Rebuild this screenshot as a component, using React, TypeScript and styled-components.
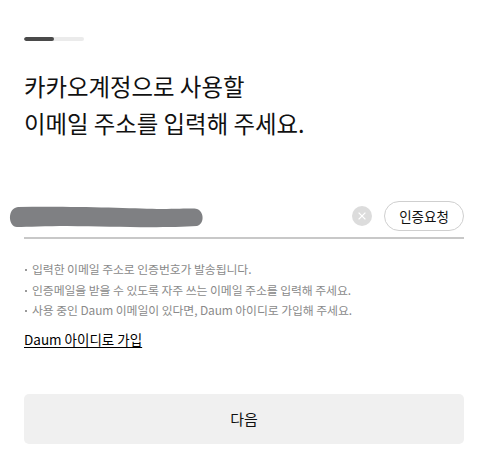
import React, { FC } from 'react';
import styled, { createGlobalStyle } from 'styled-components';

const GlobalStyle = createGlobalStyle`
	html, body {
		margin: 0;
		padding: 0;
		background: #fff;
	}
	body {
		font-family: 'Noto Sans CJK KR', 'Noto Sans', 'Liberation Sans', sans-serif;
		color: #000;
	}
`;

const notices = [
	'입력한 이메일 주소로 인증번호가 발송됩니다.',
	'인증메일을 받을 수 있도록 자주 쓰는 이메일 주소를 입력해 주세요.',
	'사용 중인 Daum 이메일이 있다면, Daum 아이디로 가입해 주세요.',
];

const App: FC = () => {
	return (
		<>
			<GlobalStyle />
			<Page>
				<Progress>
					<ProgressFill $percent={50} />
				</Progress>
				<Title>
					카카오계정으로 사용할
					<br />
					이메일 주소를 입력해 주세요.
				</Title>
				<InputRow>
					<EmailInput type="text" aria-label="이메일" />
					<Redaction viewBox="0 0 198 22" preserveAspectRatio="none">
						<path
							d="M11 1 C60 0 120 2 150 3 C170 3 187 2 190 3 C197 5 198 18 190 20 C160 22 110 21 60 20 C40 20 20 21 10 21 C1 21 0 2 11 1 Z"
							fill="#7f8083"
						/>
					</Redaction>
					<ClearButton type="button" aria-label="지우기">
						<svg width="20" height="20" viewBox="0 0 20 20">
							<circle cx="10" cy="10" r="10" fill="#dcdcdc" />
							<path d="M6.6 6.6 L13.4 13.4 M13.4 6.6 L6.6 13.4" stroke="#fff" strokeWidth="1.3" />
						</svg>
					</ClearButton>
					<RequestButton type="button">인증요청</RequestButton>
				</InputRow>
				<NoticeList>
					{notices.map((text) => (
						<NoticeItem key={text}>{text}</NoticeItem>
					))}
				</NoticeList>
				<DaumLink href="#">Daum 아이디로 가입</DaumLink>
				<NextButton type="button">다음</NextButton>
			</Page>
		</>
	);
};

export default App;

const Page = styled.div`
	display: flex;
	flex-direction: column;
	padding: 37px 16px 0 24px;
`;

const Progress = styled.div`
	width: 60px;
	height: 4px;
	border-radius: 2px;
	background: #ebebeb;
	overflow: hidden;
`;

const ProgressFill = styled.div<{ $percent: number }>`
	width: ${(props) => props.$percent}%;
	height: 100%;
	background: #4a4a4a;
	border-radius: 2px;
`;

const Title = styled.h2`
	margin: 27px 0 0;
	font-size: 23.4px;
	font-weight: 400;
	line-height: 37px;
	letter-spacing: 0;
	color: #111;
`;

const InputRow = styled.div`
	position: relative;
	display: flex;
	align-items: center;
	gap: 12px;
	margin-top: 59px;
	padding-bottom: 6px;
	border-bottom: 2px solid #c8c8c8;
`;

const EmailInput = styled.input`
	flex: 1;
	min-width: 0;
	height: 30px;
	border: 0;
	outline: none;
	padding: 0;
	font-size: 16px;
	font-family: inherit;
	background: transparent;
`;

const Redaction = styled.svg`
	position: absolute;
	left: -17px;
	top: 5px;
	width: 198px;
	height: 22px;
	pointer-events: none;
`;

const ClearButton = styled.button`
	display: flex;
	padding: 0;
	border: 0;
	background: none;
`;

const RequestButton = styled.button`
	width: 80px;
	height: 30px;
	border: 1px solid #cfcfcf;
	border-radius: 15px;
	background: #fff;
	font-family: inherit;
	font-size: 13.5px;
	color: #111;
	padding: 0;
`;

const NoticeList = styled.ul`
	list-style: none;
	margin: 20px 0 0;
	padding: 0;
`;

const NoticeItem = styled.li`
	position: relative;
	padding-left: 8px;
	font-size: 11.9px;
	line-height: 20.5px;
	color: #8a8a8a;
	letter-spacing: -0.1px;

	&::before {
		content: '';
		position: absolute;
		left: 1px;
		top: 10px;
		width: 2px;
		height: 2px;
		background: #9a9a9a;
	}
`;

const DaumLink = styled.a`
	align-self: flex-start;
	margin-top: 8px;
	font-size: 13.5px;
	line-height: 20px;
	color: #000;
	text-decoration: underline;
	text-underline-offset: 2px;
`;

const NextButton = styled.button`
	margin-top: 45px;
	height: 50px;
	border: 0;
	border-radius: 5px;
	background: #f0f0f0;
	font-family: inherit;
	font-size: 15px;
	color: #111;
`;
